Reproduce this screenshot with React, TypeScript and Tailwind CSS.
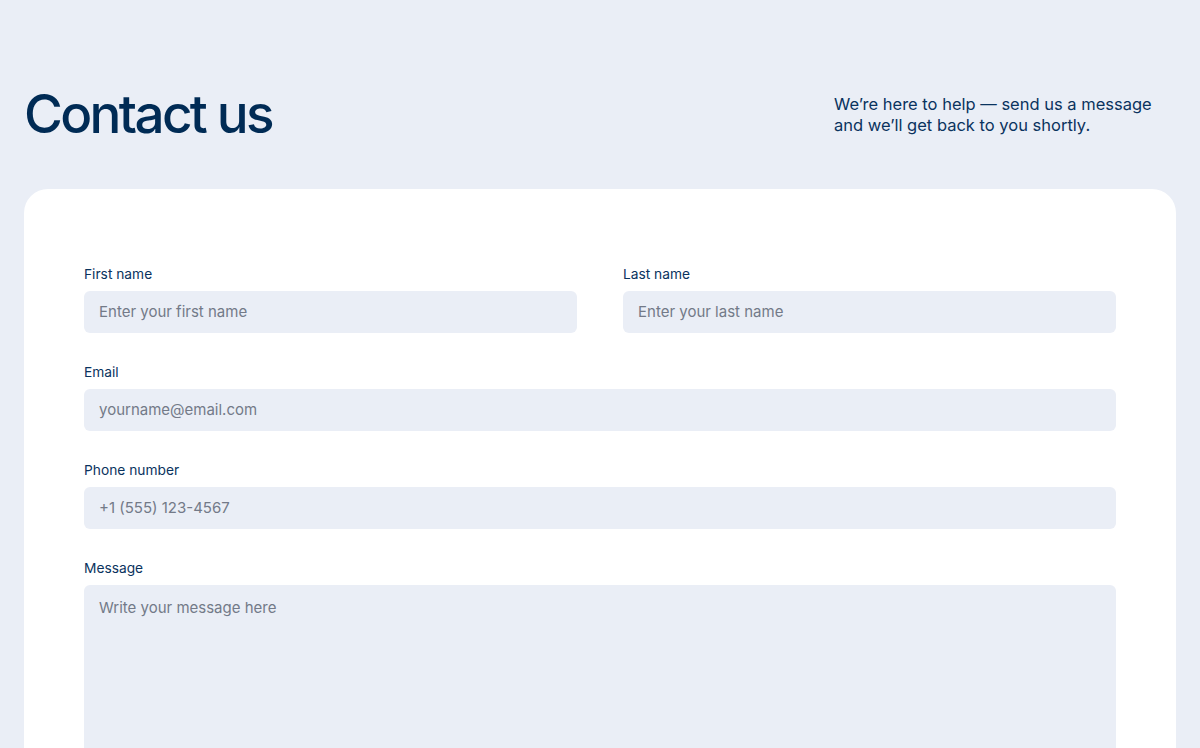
import React from "react";

function Field({ label, placeholder }: { label: string; placeholder: string }) {
  return (
    <label className="flex flex-col">
      <span className="pt-px text-[13.75px] leading-5 text-[#0a335e] mb-[7px]">{label}</span>
      <input
        className="h-[42px] w-full rounded-md bg-[#eaeef6] px-[15px] pb-[2px] text-[15px] text-[#002b55] placeholder:text-[#737a88] outline-none"
        placeholder={placeholder}
      />
    </label>
  );
}

export default function App() {
  return (
    <div
      className="min-h-screen bg-[#eaeef6] px-6 pt-[86px]"
      style={{ fontFamily: "Inter, 'Noto Sans', sans-serif" }}
    >
      <div className="flex items-center justify-between">
        <h1 className="text-[53px] leading-[56px] tracking-[-0.05em] text-[#002b55] font-medium">
          Contact us
        </h1>
        <p className="w-[330px] mr-3 text-[16.5px] leading-[21px] text-[#0a335e] mt-[2px]">
          We’re here to help — send us a message and we’ll get back to you shortly.
        </p>
      </div>
      <div className="mt-[47px] rounded-[24px] bg-white px-[60px] pt-[74px] pb-16">
        <div className="flex flex-col gap-7">
          <div className="grid grid-cols-2 gap-[46px]">
            <Field label="First name" placeholder="Enter your first name" />
            <Field label="Last name" placeholder="Enter your last name" />
          </div>
          <Field label="Email" placeholder="yourname@email.com" />
          <Field label="Phone number" placeholder="+1 (555) 123-4567" />
          <label className="flex flex-col">
            <span className="pt-px text-[13.75px] leading-5 text-[#0a335e] mb-[7px]">Message</span>
            <textarea
              className="h-[220px] w-full resize-none rounded-md bg-[#eaeef6] px-[15px] py-[13px] text-[15px] leading-5 text-[#002b55] placeholder:text-[#737a88] outline-none"
              placeholder="Write your message here"
            />
          </label>
        </div>
      </div>
    </div>
  );
}
